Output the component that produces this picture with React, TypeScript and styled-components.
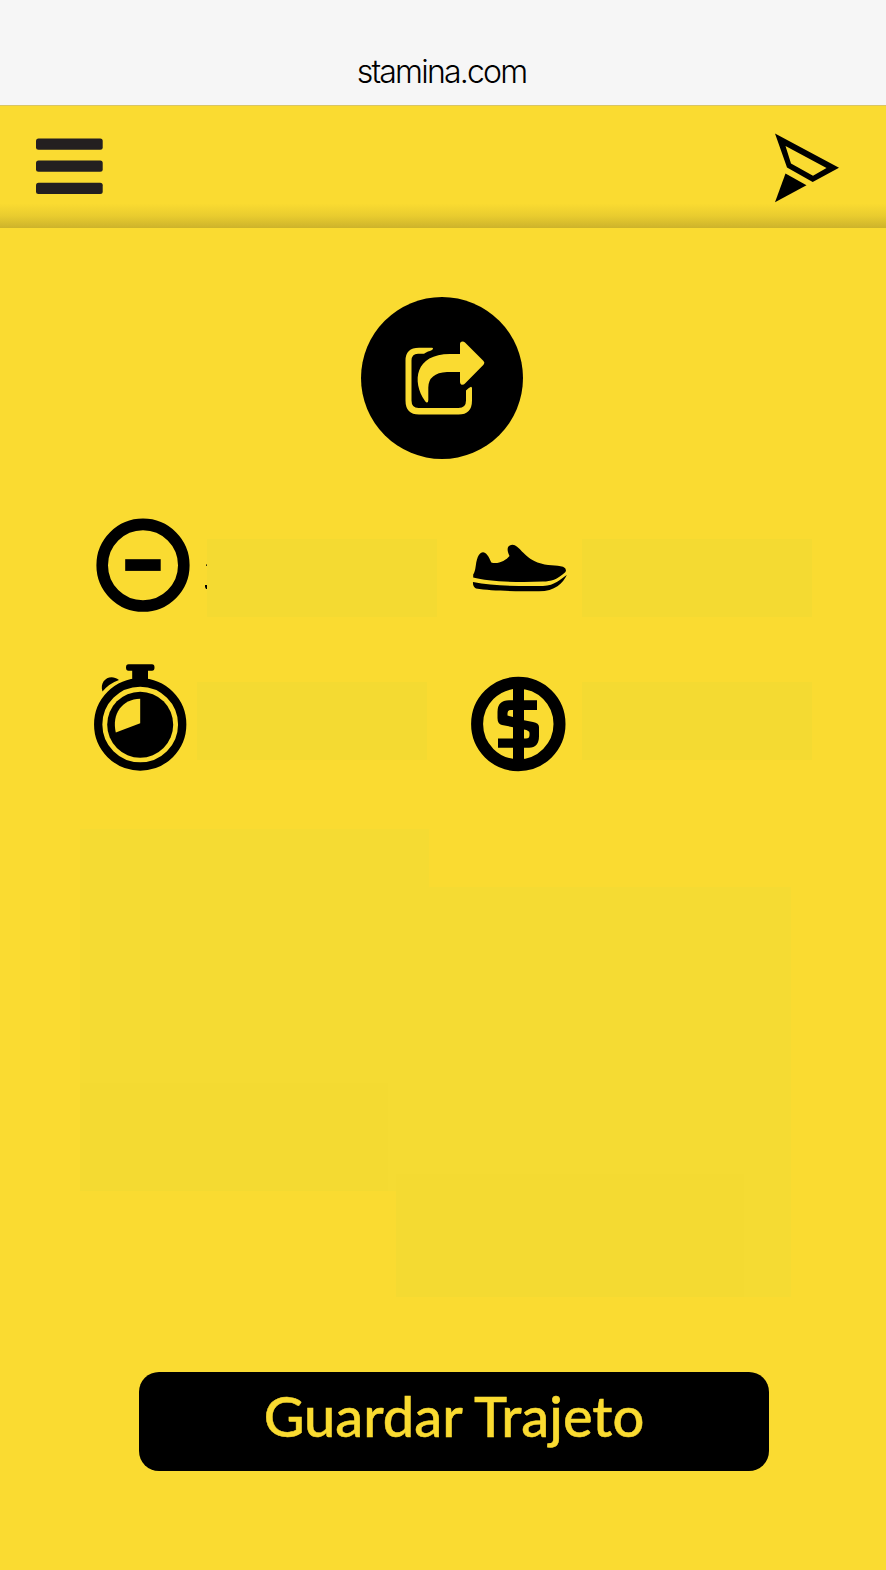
import React from "react";
import styled, { createGlobalStyle } from "styled-components";

const yellow = "#fadb31";

const GlobalStyle = createGlobalStyle`
  * { box-sizing: border-box; }
  body { margin: 0; background: ${yellow}; }
  svg { display: block; flex: none; }
`;

const Screen = styled.main`
  display: flex;
  flex-direction: column;
  width: 886px;
  height: 1570px;
  overflow: hidden;
  background: ${yellow};
`;

const AddressBar = styled.div`
  display: flex;
  justify-content: center;
  height: 106px;
  padding: 52px 3px 0 0;
  background: #f6f6f6;
  border-bottom: 1px solid #d9c565;
  color: #000;
  font: 300 32px/40px Inter, "Liberation Sans", sans-serif;
  letter-spacing: -1.8px;
`;

const Header = styled.header`
  display: flex;
  justify-content: space-between;
  height: 122px;
  padding: 24px 42px 0 36px;
  background: linear-gradient(to bottom, ${yellow} 80%, #e9cc2f 90%, #cdb32b 100%);
`;

const IconButton = styled.button`
  display: block;
  height: 76px;
  padding: 0;
  border: 0;
  background: none;
`;

const ShareButton = styled.button`
  display: flex;
  align-items: center;
  justify-content: center;
  align-self: center;
  width: 162px;
  height: 162px;
  margin: 69.4px 1.6px 55.6px 0;
  padding: 0;
  border: 0;
  border-radius: 50%;
  background: #000;
`;

const MetricRow = styled.section<{ $height: number; $gap: number }>`
  display: flex;
  height: ${(p) => p.$height}px;
  margin-bottom: ${(p) => p.$gap}px;
  padding-left: 92px;
`;

const Metric = styled.div`
  display: flex;
`;

const ValueSlot = styled.div<{ $top: number }>`
  width: 230px;
  height: 78px;
  margin-top: ${(p) => p.$top}px;
  background: #f4da32;
`;

const RouteMap = styled.section`
  display: grid;
  grid-template-columns: 308px 8px 33px 315px 47px;
  grid-template-rows: 58px 196px 91px 17px 106px;
  width: 711px;
  margin: -1px 0 0 80px;
`;

const MapTile = styled.div<{ $area: string; $deep?: boolean }>`
  grid-area: ${(p) => p.$area};
  background: ${(p) => (p.$deep ? "#f4da32" : "#f5db33")};
`;

const SaveButton = styled.button`
  width: 630px;
  height: 99px;
  margin: 75px 0 0 139px;
  padding: 0 0 10px;
  border: 0;
  border-radius: 20px;
  background: #000;
  color: ${yellow};
  font: 500 56px/60px Lato, sans-serif;
  -webkit-text-stroke: 0.5px ${yellow};
`;

const MenuIcon = () => (
  <svg width="67" height="76" viewBox="36 130 67 76" fill="#231f20">
    <rect x="36" y="138.5" width="66.7" height="11.3" rx="2.5" />
    <rect x="36" y="160.5" width="66.7" height="11.3" rx="2.5" />
    <rect x="36" y="182.7" width="66.7" height="11.3" rx="2.5" />
  </svg>
);

const SendIcon = () => (
  <svg width="70" height="76" viewBox="774 130 70 76">
    <path fillRule="evenodd" d="M775 133.5 839 167.7 812.7 182 787 167.5ZM785.5 146 791 163.5 813 175.7 826.5 168Z" />
    <path d="M785.5 173.5 806.5 185.2 775 202.2Z" />
  </svg>
);

const ShareIcon = () => (
  <svg width="162" height="162" viewBox="361 297.5 162 162" fill={yellow}>
    <path
      d="M432 348.2Q434 348.8 432 350.5C429 352 427 352 424 354.2H418Q411.5 354.5 411.5 361V401Q411.5 408.5 418.5 408.5H458.5Q466 408.5 466 401V391Q468.5 388.5 471 387.3Q472 387.3 472 389V401Q472 415 458.5 415H419Q405.5 415 405.5 401V361Q405.5 348.2 419 348.2Z"
    />
    <path
      d="M460 354.5V344.5Q460 342 462.5 342Q464 342 465 343L483.5 361.5Q485.3 363.3 483.5 365.3L465 384Q464 385.2 462 385.2Q460 385 460 382V372.5H447Q428.5 373.5 428.3 388V400.5Q428.3 403 427 403Q426 403 425 401.5C411.5 382 415 354.5 450 354.5Z"
    />
  </svg>
);

const DistanceIcon = () => (
  <svg width="115" height="102" viewBox="92 515 115 102">
    <circle cx="143" cy="565.2" r="40.8" fill="none" stroke="#000" strokeWidth="11.6" />
    <rect x="125.2" y="559.2" width="35.5" height="11.7" />
    <path d="M206 564.5h1v1.2h-1ZM205 585h2v4h-1l-1-2Z" />
  </svg>
);

const ShoeIcon = () => (
  <svg width="145" height="102" viewBox="437 515 145 102">
    <path d="M475.8 565.5C477 556 480 552.3 483 552.3C486 552.3 488.5 556 491.3 562.5C498 564.5 506 560.5 509.5 556C505.5 548 508.5 544.7 512.5 544.7C519 544.7 523 556.5 537.5 562.5C547 566 557 565 563 566.7Q567.5 569 565.2 572.2C557 579.5 551 581.5 543 581.5L524 582C504 582 484 580.5 473.2 577.5V574.5Q475 572 475.8 565.5Z" />
    <path d="M473 582C489 585.3 508 586 530 586H543C555 585.5 561 579 566.8 575C563 583 555 591.3 539 591.3C515 591.3 491 591 476 588.5Q472.5 586.5 473 582Z" />
  </svg>
);

const StopwatchIcon = () => (
  <svg width="105" height="112" viewBox="92 660 105 112">
    <circle cx="140.2" cy="724.5" r="42" fill="none" stroke="#000" strokeWidth="8.3" />
    <circle cx="140.2" cy="724.7" r="33" />
    <path fill={yellow} d="M140.2 698.7V723.3L115.8 732.5C111.5 714 122 699 140.2 698.7Z" />
    <path d="M128.5 664.3H152Q154.5 664.3 154.5 667.5Q154.5 670.7 152 670.7H148V682H132.2V670.7H128.5Q126 670.7 126 667.5Q126 664.3 128.5 664.3ZM102.5 691.5C99 680.5 110 673 119 680Q109 683.5 102.5 691.5Z" />
  </svg>
);

const CostIcon = () => (
  <svg width="155" height="112" viewBox="427 660 155 112">
    <circle cx="518.3" cy="724" r="41.2" fill="none" stroke="#000" strokeWidth="12" />
    <path fillRule="evenodd" d="M513 688H524V700.3H537V710H524V720.2L533 722Q539 723.2 539 727V736Q539 747.7 529 747.7H524V760H513V747.7H498V738.5H513V727.2L502 725Q497.5 724 497.5 718V712Q497.5 700.3 509 700.3H513ZM513 710H511Q507.5 710 507.5 713V715.5L513 717ZM524 729.5V738.5H526Q529.5 738.5 529.5 735V733Q529.5 730.5 524 729.5Z" />
  </svg>
);

export default function App() {
  return (
    <>
      <GlobalStyle />
      <Screen>
        <AddressBar>stamina.com</AddressBar>
        <Header>
          <IconButton aria-label="Menú"><MenuIcon /></IconButton>
          <IconButton aria-label="Ubicación"><SendIcon /></IconButton>
        </Header>
        <ShareButton aria-label="Compartir"><ShareIcon /></ShareButton>
        <MetricRow $height={102} $gap={43}>
          <Metric><DistanceIcon /><ValueSlot $top={24} /></Metric>
          <Metric><ShoeIcon /><ValueSlot $top={24} /></Metric>
        </MetricRow>
        <MetricRow $height={112} $gap={58}>
          <Metric><StopwatchIcon /><ValueSlot $top={22} /></Metric>
          <Metric><CostIcon /><ValueSlot $top={22} /></Metric>
        </MetricRow>
        <RouteMap>
          <MapTile $area="1 / 1 / 2 / 4" />
          <MapTile $area="2 / 1 / 3 / 3" />
          <MapTile $area="2 / 3 / 4 / 6" />
          <MapTile $area="3 / 2 / 5 / 3" />
          <MapTile $area="3 / 1 / 5 / 2" $deep />
          <MapTile $area="4 / 5 / 6 / 6" />
          <MapTile $area="4 / 3 / 6 / 5" $deep />
        </RouteMap>
        <SaveButton>Guardar Trajeto</SaveButton>
      </Screen>
    </>
  );
}
